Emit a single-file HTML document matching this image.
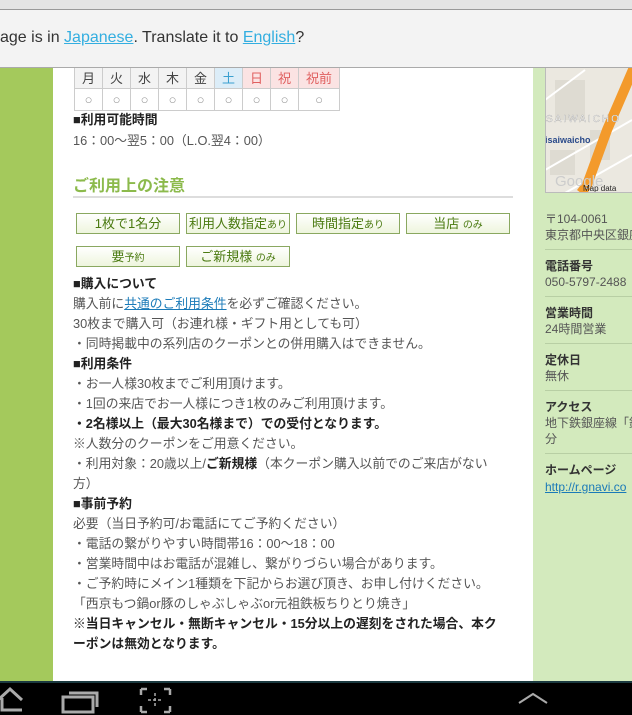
<!DOCTYPE html>
<html><head><meta charset="utf-8"><style>
*{margin:0;padding:0;box-sizing:border-box}
body{width:632px;height:715px;overflow:hidden;position:relative;background:#fff;font-family:"Liberation Sans","Noto Sans CJK JP",sans-serif;color:#444}
.abs{position:absolute}
.l{position:absolute;left:73px;font-size:12.8px;line-height:20px;white-space:nowrap;color:#555}
.b{font-weight:bold;color:#222}
table{border-collapse:collapse;position:absolute;left:74px;top:66px}
td{border:1px solid #ccc;width:23px;height:22px;text-align:center;font-size:13px;color:#999}
.btn{position:absolute;height:21px;border:1px solid #8aa860;background:linear-gradient(#fff,#eef5dd);font-size:13px;color:#4a7a10;text-align:center;line-height:19px;width:104px}
.btn small{font-size:10px}
.s{position:absolute;left:545px;font-size:12px;line-height:16px;white-space:nowrap;color:#555}
.sh{font-weight:bold;color:#333}
.hr{position:absolute;left:545px;width:87px;height:1px;background:#b8cfa4}
</style></head><body>
<div class="abs" style="left:0;top:0;width:53px;height:682px;background:#a4c95c"></div>
<div class="abs" style="left:533px;top:0;width:99px;height:682px;background:#d3eabd"></div>
<table>
<tr><td style="color:#444;background:#f3f3f3;width:28px">月</td><td style="color:#444;background:#f3f3f3;width:28px">火</td><td style="color:#444;background:#f3f3f3;width:28px">水</td><td style="color:#444;background:#f3f3f3;width:28px">木</td><td style="color:#444;background:#f3f3f3;width:28px">金</td><td style="color:#3aa0d0;background:#dcedf8;width:28px">土</td><td style="color:#e06060;background:#fbe3e3;width:28px">日</td><td style="color:#e06060;background:#fbe3e3;width:28px">祝</td><td style="color:#e06060;background:#fbe3e3;width:41px">祝前</td></tr>
<tr><td>○</td><td>○</td><td>○</td><td>○</td><td>○</td><td>○</td><td>○</td><td>○</td><td>○</td></tr>
</table>
<div class="l b" style="top:110px">■利用可能時間</div>
<div class="l" style="top:131px">16：00～翌5：00（L.O.翌4：00）</div>
<div class="abs" style="left:73px;top:172px;font-size:16px;font-weight:bold;color:#8cba4c">ご利用上の注意</div>
<div class="abs" style="left:73px;top:196px;width:440px;height:2px;background:#ddd"></div>
<div class="btn" style="left:76px;top:213px">1枚で1名分</div>
<div class="btn" style="left:186px;top:213px">利用人数指定<small>あり</small></div>
<div class="btn" style="left:296px;top:213px">時間指定<small>あり</small></div>
<div class="btn" style="left:406px;top:213px">当店 <small>のみ</small></div>
<div class="btn" style="left:76px;top:246px">要<small>予約</small></div>
<div class="btn" style="left:186px;top:246px">ご新規様 <small>のみ</small></div>
<div class="l b" style="top:274px">■購入について</div>
<div class="l" style="top:294px">購入前に<span style="color:#1a7ab8;text-decoration:underline">共通のご利用条件</span>を必ずご確認ください。</div>
<div class="l" style="top:314px">30枚まで購入可（お連れ様・ギフト用としても可）</div>
<div class="l" style="top:334px">・同時掲載中の系列店のクーポンとの併用購入はできません。</div>
<div class="l b" style="top:354px">■利用条件</div>
<div class="l" style="top:374px">・お一人様30枚までご利用頂けます。</div>
<div class="l" style="top:394px">・1回の来店でお一人様につき1枚のみご利用頂けます。</div>
<div class="l b" style="top:414px">・2名様以上（最大30名様まで）での受付となります。</div>
<div class="l" style="top:434px">※人数分のクーポンをご用意ください。</div>
<div class="l" style="top:454px">・利用対象：20歳以上/<b style="color:#222">ご新規様</b>（本クーポン購入以前でのご来店がない</div>
<div class="l" style="top:474px">方）</div>
<div class="l b" style="top:494px">■事前予約</div>
<div class="l" style="top:514px">必要（当日予約可/お電話にてご予約ください）</div>
<div class="l" style="top:534px">・電話の繋がりやすい時間帯16：00～18：00</div>
<div class="l" style="top:554px">・営業時間中はお電話が混雑し、繋がりづらい場合があります。</div>
<div class="l" style="top:574px">・ご予約時にメイン1種類を下記からお選び頂き、お申し付けください。</div>
<div class="l" style="top:594px">「西京もつ鍋or豚のしゃぶしゃぶor元祖鉄板ちりとり焼き」</div>
<div class="l b" style="top:614px">※当日キャンセル・無断キャンセル・15分以上の遅刻をされた場合、本ク</div>
<div class="l b" style="top:634px">ーポンは無効となります。</div>
<svg class="abs" style="left:545px;top:60px" width="87" height="133">
<rect width="87" height="133" fill="#ebe8e0"/>
<path d="M10 20h30v40h-30zM45 70h20v30h-20zM5 90h25v25h-25z" fill="#dedbd2"/>
<path d="M0 40 L40 10 M0 110 L87 60 M20 133 L87 95" stroke="#fff" stroke-width="2"/>
<path d="M90 5 L62 70 L42 125 L36 133" stroke="#f39a2b" stroke-width="10" fill="none"/>
<text x="1" y="62" font-size="10" fill="#fff" stroke="#999" stroke-width="0.3" letter-spacing="2" font-family="Liberation Sans">SAIWAICHO</text>
<text x="0" y="83" font-size="9" fill="#2a4a8a" font-weight="bold" font-family="Liberation Sans">isaiwaicho</text>
<text x="10" y="126" font-size="15" fill="#ccc" font-family="Liberation Sans">Google</text>
<text x="38" y="131" font-size="8" fill="#222" font-family="Liberation Sans">Map data</text>
<rect x="0.5" y="0.5" width="90" height="132" fill="none" stroke="#bbb"/>
</svg>
<div class="s" style="top:211px">〒104-0061</div>
<div class="s" style="top:227px">東京都中央区銀座</div>
<div class="hr" style="top:249px"></div>
<div class="s sh" style="top:258px">電話番号</div>
<div class="s" style="top:274px">050-5797-2488</div>
<div class="hr" style="top:296px"></div>
<div class="s sh" style="top:305px">営業時間</div>
<div class="s" style="top:321px">24時間営業</div>
<div class="hr" style="top:343px"></div>
<div class="s sh" style="top:352px">定休日</div>
<div class="s" style="top:368px">無休</div>
<div class="hr" style="top:390px"></div>
<div class="s sh" style="top:399px">アクセス</div>
<div class="s" style="top:415px">地下鉄銀座線「銀</div>
<div class="s" style="top:431px">分</div>
<div class="hr" style="top:453px"></div>
<div class="s sh" style="top:462px">ホームページ</div>
<div class="s" style="top:479px;color:#1a7ab8;text-decoration:underline">http://r.gnavi.co</div>
<div class="abs" style="left:0;top:0;width:632px;height:10px;background:#e4e4e4;border-bottom:1px solid #999"></div>
<div class="abs" style="left:0;top:10px;width:632px;height:58px;background:#f3f3f3;border-bottom:1px solid #aaa"></div>
<div class="abs" style="left:0;top:29px;font-size:16px;color:#333;white-space:nowrap">age is in <span style="color:#33aee0;text-decoration:underline">Japanese</span>. Translate it to <span style="color:#33aee0;text-decoration:underline">English</span>?</div>
<div class="abs" style="left:0;top:681px;width:632px;height:34px;background:#000;border-top:2px solid #1b3a40"></div>
<svg class="abs" style="left:0;top:683px" width="632" height="32" fill="none" stroke="#aaa" stroke-width="3">
<path d="M-2 17 L10 6 L22 17 M2 15 V27 H22"/>
<path d="M63 14h30v15h-30z M69 10h28v14"/>
<path d="M141 6h6M141 6v6M170 6h-6M170 6v6M141 29h6M141 29v-6M170 29h-6M170 29v-6" stroke-width="2.5"/>
<path d="M155 10v14M148 17h14" stroke-width="1.5" stroke-dasharray="3 2"/>
<path d="M519 20 L533 11 L547 20" stroke-width="2"/>
</svg>
</body></html>
